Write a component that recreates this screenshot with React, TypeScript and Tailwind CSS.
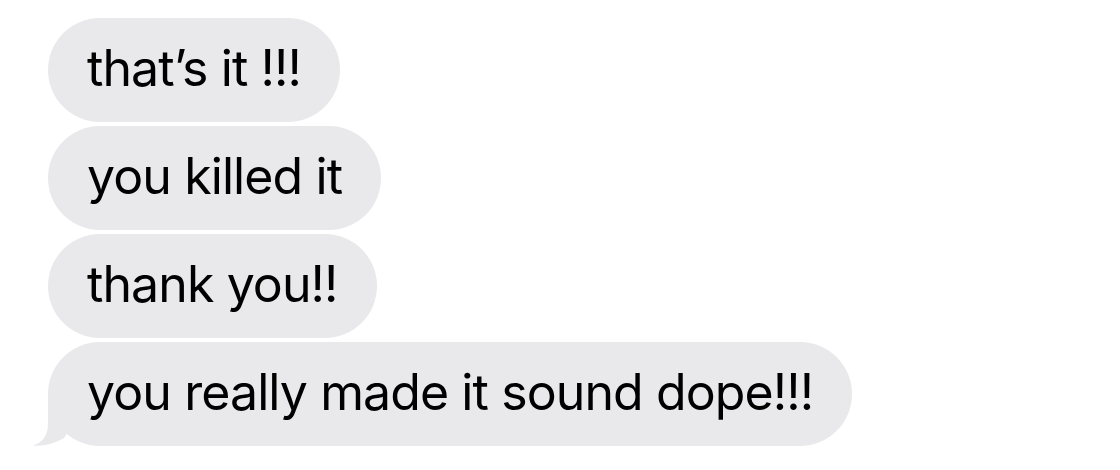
import React from "react";

const Tail = () => (
  <svg
    className="absolute left-[-16px] bottom-0"
    width="60"
    height="50"
    viewBox="0 0 60 50"
  >
    <path
      d="M16 0 L16 28 C16 40 10 47 1 49.5 C12 50.5 24 47 32 42 L40 30 Z"
      fill="#e9e9eb"
    />
  </svg>
);

const App = () => {
  const messages = [
    "that’s it !!!",
    "you killed it",
    "thank you!!",
    "you really made it sound dope!!!",
  ];

  return (
    <div className="w-[1120px] h-[470px] bg-white overflow-hidden">
      <div className="flex flex-col items-start gap-[4px] pt-[18px] pl-[48px]">
        {messages.map((text, i) => (
          <div
            key={i}
            className="relative h-[104px] rounded-full bg-[#e9e9eb] px-[39px] flex items-center text-black text-[50px] leading-none font-['Inter',sans-serif] tracking-[-0.9px]"
          >
            {i === messages.length - 1 && <Tail />}
            <span className="relative pb-[4px]">{text}</span>
          </div>
        ))}
      </div>
    </div>
  );
};

export default App;
